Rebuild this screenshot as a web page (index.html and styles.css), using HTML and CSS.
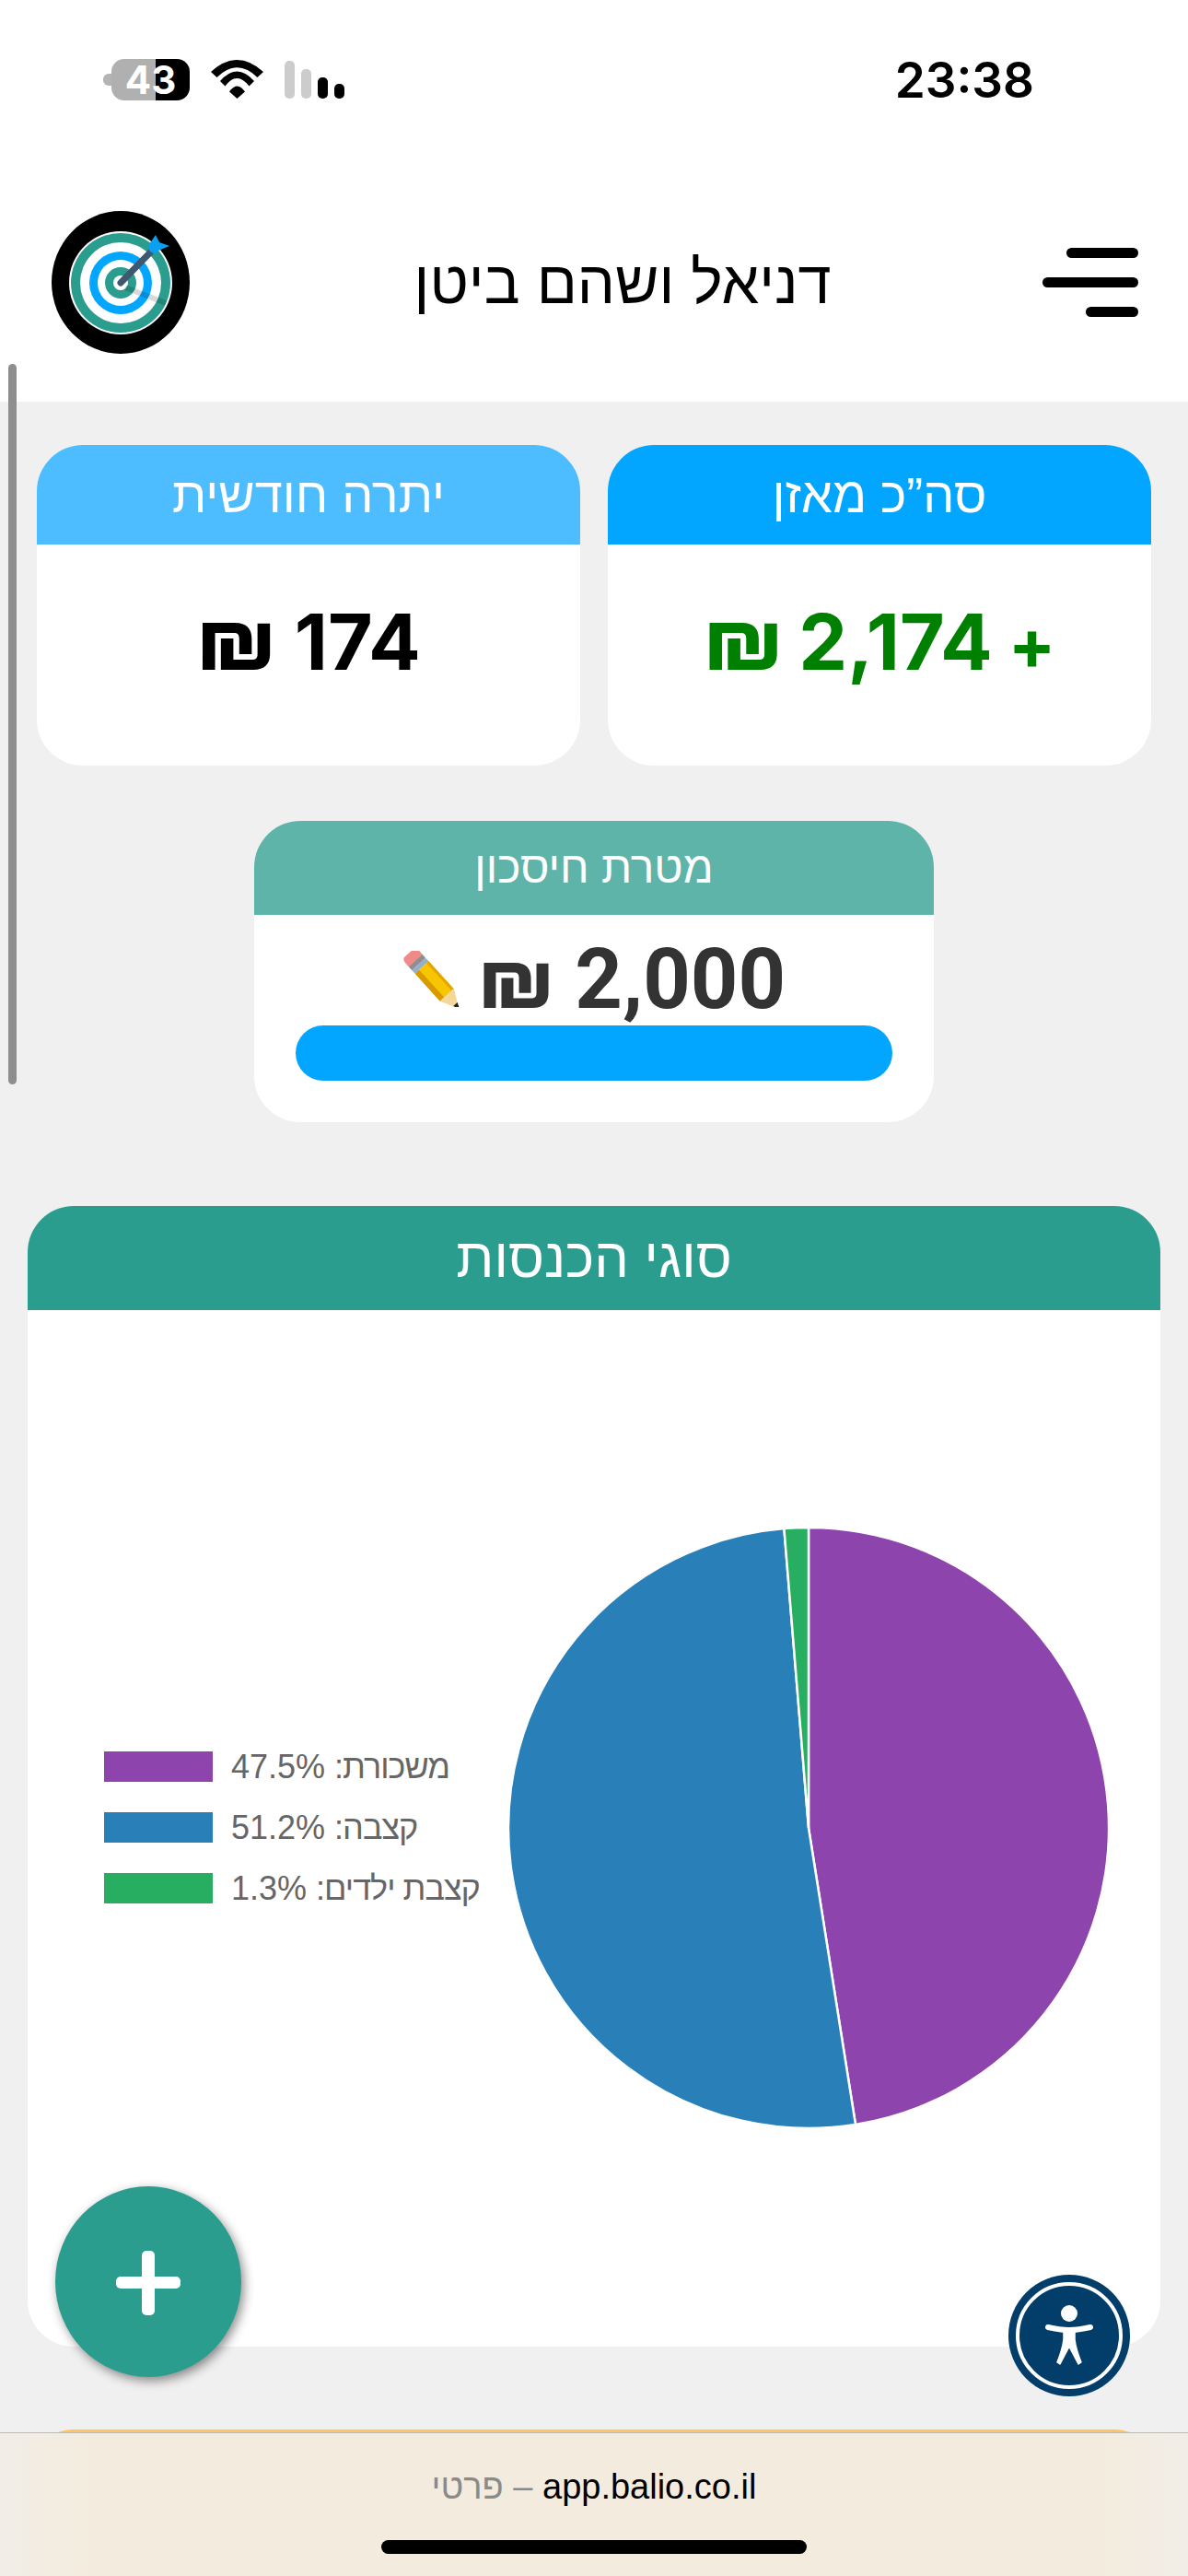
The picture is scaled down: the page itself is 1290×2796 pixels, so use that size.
FILE: index.html
```html
<!DOCTYPE html>
<html lang="he">
<head>
<meta charset="utf-8">
<title>Balio</title>
<link rel="stylesheet" href="styles.css">
</head>
<body>
<div class="page">
  <div class="status">
    <div class="status-left">
      <div class="battery"><span class="nub"></span><span class="cell">43</span></div>
      <svg class="wifi" width="57" height="42" viewBox="0 0 57 42"><path d="M0 13Q28.5-13 57 13L50.5 19Q28.5-2.4 6.5 19Z"/><path d="M10 23Q28.5 2 47 23L41.5 28.5Q28.5 11.5 15.5 28.5Z"/><path d="M20 34.5Q28.5 22.5 37 34.5L28.5 42Z"/></svg>
      <div class="signal"><i class="s1"></i><i class="s2"></i><i class="s3"></i><i class="s4"></i></div>
    </div>
    <div class="time">23:38</div>
  </div>

  <header class="topbar">
    <svg class="logo" width="150" height="155" viewBox="0 0 150 155">
      <ellipse cx="75" cy="77.5" rx="75" ry="77.5" fill="#000"/>
      <circle cx="75" cy="78" r="56" fill="#fff"/>
      <circle cx="75" cy="78" r="54" fill="#2a9d8f"/>
      <circle cx="75" cy="78" r="44" fill="#fff"/>
      <circle cx="75" cy="78" r="34" fill="#03a6ff"/>
      <circle cx="75" cy="78" r="25" fill="#fff"/>
      <circle cx="75" cy="78" r="17" fill="#2a9d8f"/>
      <circle cx="75" cy="78" r="8" fill="#fff"/>
      <path d="M80 83L124 100" stroke="#000" stroke-opacity=".15" stroke-width="6" fill="none"/>
      <path d="M75 78L110 42" stroke="#3f5870" stroke-width="7" stroke-linecap="round" fill="none"/>
      <path d="M113 26L117 34L128 38L116 43L112 47L106 43L106 36Z" fill="#0a9ff0"/>
    </svg>
    <h1 class="title" dir="rtl">דניאל ושהם ביטן</h1>
    <div class="burger"><i class="b1"></i><i class="b2"></i><i class="b3"></i></div>
  </header>

  <main class="content">
    <section class="stats">
      <article class="card">
        <h2 class="card-head head-light" dir="rtl">יתרה חודשית</h2>
        <div class="card-body"><span class="amount" dir="rtl">174 <span class="shekel">₪</span></span></div>
      </article>
      <article class="card">
        <h2 class="card-head head-blue" dir="rtl">סה”כ מאזן</h2>
        <div class="card-body"><span class="amount positive" dir="rtl"><span class="plus">+</span> 2,174 <span class="shekel">₪</span></span></div>
      </article>
    </section>

    <section class="goal">
      <h2 class="goal-head" dir="rtl">מטרת חיסכון</h2>
      <div class="goal-body">
        <div class="goal-line">
          <svg class="pencil" width="62" height="61" viewBox="0 0 62 61">
            <g transform="translate(11 7) rotate(47.7)">
              <path d="M-6 -6Q-6 -10 0 -10H6V10H0Q-6 10 -6 6Z" fill="#ee8a8a"/>
              <rect x="5" y="-10" width="5" height="20" fill="#8f8f8f"/>
              <rect x="10" y="-10" width="5" height="20" fill="#94aecb"/>
              <path d="M15 -10H55L74 0L55 10H15Z" fill="#f7c600"/>
              <path d="M15 -10H55L61 -7H15Z" fill="#e5a400"/>
              <path d="M15 4H64L55 10H15Z" fill="#d89a00"/>
              <path d="M55 -10L75 0L55 10Z" fill="#f5d79a"/>
              <path d="M69 -3L76 0L69 3Z" fill="#222"/>
            </g>
          </svg>
          <span class="goal-amount" dir="rtl">2,000 <span class="goal-shekel">₪</span></span>
        </div>
        <div class="progress"></div>
      </div>
    </section>

    <section class="chart-card">
      <h2 class="chart-head" dir="rtl">סוגי הכנסות</h2>
      <div class="chart-body">
        <ul class="legend">
          <li class="legend-row"><i class="swatch c-purple"></i><span dir="rtl"><span class="legend-name">משכורת:</span> 47.5%</span></li>
          <li class="legend-row"><i class="swatch c-blue"></i><span dir="rtl"><span class="legend-name">קצבה:</span> 51.2%</span></li>
          <li class="legend-row"><i class="swatch c-green"></i><span dir="rtl"><span class="legend-name">קצבת ילדים:</span> 1.3%</span></li>
        </ul>
        <svg class="pie" width="654" height="654" viewBox="-327 -327 654 654">
          <g stroke="#fff" stroke-width="2.5">
            <path d="M0 0L0 -326A326 326 0 0 1 51 322Z" fill="#8e44ad"/>
            <path d="M0 0L51 322A326 326 0 1 1 -26.6 -324.9Z" fill="#2980b9"/>
            <path d="M0 0L-26.6 -324.9A326 326 0 0 1 0 -326Z" fill="#27ae60"/>
          </g>
        </svg>
      </div>
    </section>

    <section class="next-card"></section>
  </main>

  <div class="scrollbar"></div>

  <button class="fab" aria-label="הוספה"><i class="plus-h"></i><i class="plus-v"></i></button>

  <div class="a11y">
    <svg width="132" height="132" viewBox="-66 -66 132 132">
      <circle r="66" fill="#033e6b"/>
      <circle r="56" fill="none" stroke="#fff" stroke-width="4"/>
      <circle cy="-24" r="9" fill="#fff"/>
      <path d="M-23 -9Q-10 -6 0 -6Q10 -6 23 -9" fill="none" stroke="#fff" stroke-width="6" stroke-linecap="round"/>
      <path d="M-6 -7H6V4Q7 14 13 29L10 31L0 12L-10 31L-13 29Q-7 14 -6 4Z" fill="#fff" stroke="#fff" stroke-width="1.5" stroke-linejoin="round"/>
    </svg>
  </div>

  <footer class="urlbar">
    <div class="url" dir="rtl">app.balio.co.il <span class="url-note">– פרטי</span></div>
    <div class="home"></div>
  </footer>
</div>
</body>
</html>
```
FILE: styles.css
```css
* { box-sizing: border-box; }
html, body { margin: 0; padding: 0; }
body { background: #f0f0f0; font-family: "Liberation Sans", Arial, sans-serif; }
.page { position: relative; width: 1290px; height: 2796px; overflow: hidden; background: #f0f0f0; }

.status { height: 172px; background: #fff; display: flex; justify-content: space-between; align-items: center; padding: 0 167px 0 112px; }
.status-left { display: flex; align-items: center; gap: 23px; }
.battery { display: flex; align-items: center; }
.nub { width: 9px; height: 13px; background: #b4b4b4; border-radius: 6px 0 0 6px; }
.cell { width: 85px; height: 45px; border-radius: 14px; background: linear-gradient(90deg, #b0b0b0 56.5%, #000 56.5%); color: #fff; font: 700 42px/45px "Inter", "Liberation Sans", sans-serif; text-align: center; }
.wifi { fill: #000; display: block; }
.signal { display: flex; align-items: flex-end; gap: 7px; height: 41px; }
.signal i { display: block; width: 11px; border-radius: 5px; background: #000; }
.signal .s1 { height: 41px; background: #ccc; }
.signal .s2 { height: 32px; background: #ccc; }
.signal .s3 { height: 23px; }
.signal .s4 { height: 16px; }
.time { margin-top: 3px; font: 600 53px/1 "Inter", "Liberation Sans", sans-serif; color: #000; }

.topbar { height: 264px; background: #fff; display: flex; align-items: center; padding: 5px 54px 0 56px; }
.logo { flex: none; display: block; }
.title { flex: 1; margin: 0; padding-left: 14px; text-align: center; font: 400 65px/1.2 "Liberation Sans", sans-serif; color: #000; }
.burger { flex: none; width: 104px; display: flex; flex-direction: column; align-items: flex-end; gap: 21px; }
.burger i { display: block; height: 11px; background: #000; border-radius: 6px; }
.b1 { width: 78px; }
.b2 { width: 104px; }
.b3 { width: 57px; }

.stats { display: grid; grid-template-columns: 590px 590px; gap: 30px; padding: 47px 40px 0; }
.card { height: 348px; background: #fff; border-radius: 50px; overflow: hidden; }
.card-head { height: 108px; margin: 0; text-align: center; color: #fff; font: 400 54px/108px "Liberation Sans", sans-serif; }
.head-light { background: #4dbdff; }
.head-blue { background: #03a6ff; }
.card-body { height: 240px; padding-top: 55px; text-align: center; }
.amount { font: 700 84px/100px "Inter", "Liberation Sans", sans-serif; color: #000; }
.positive { color: #008000; word-spacing: -3px; }
.shekel { font-size: 94px; line-height: 1; }
.plus { font-size: 76px; }

.goal { width: 738px; height: 327px; margin: 60px auto 0; background: #fff; border-radius: 50px; overflow: hidden; }
.goal-head { height: 102px; margin: 0; background: #5fb4aa; color: #fff; text-align: center; font: 400 48px/102px "Liberation Sans", sans-serif; }
.goal-body { padding: 22px 45px 0; }
.goal-line { display: flex; justify-content: center; align-items: center; gap: 20px; height: 98px; }
.goal-amount { font: 700 90px/100px "Roboto", "Liberation Sans", sans-serif; color: #333; }
.goal-shekel { font: 700 90px/1 "Inter", "Liberation Sans", sans-serif; }
.pencil { display: block; flex: none; margin-top: -4px; }
.progress { height: 60px; background: #03a6ff; border-radius: 30px; }

.chart-card { margin: 91px 30px 0; height: 1238px; background: #fff; border-radius: 50px; overflow: hidden; }
.chart-head { height: 113px; margin: 0; background: #2a9d8f; color: #fff; text-align: center; font: 400 59.5px/113px "Liberation Sans", sans-serif; }
.chart-body { height: 1125px; display: flex; justify-content: space-between; align-items: center; padding: 0 55px 2px 83px; }
.legend { list-style: none; margin: 0; padding: 0; display: flex; flex-direction: column; gap: 33px; }
.legend-row { display: flex; align-items: center; gap: 20px; height: 33px; color: #666; font: 400 36px/33px "Liberation Sans", sans-serif; white-space: nowrap; }
.legend-name { letter-spacing: -1px; }
.swatch { display: block; width: 118px; height: 33px; }
.c-purple { background: #8e44ad; }
.c-blue { background: #2980b9; }
.c-green { background: #27ae60; }
.pie { display: block; flex: none; }

.next-card { margin: 90px 30px 0; height: 400px; background: #ffc45c; border-radius: 50px; }

.scrollbar { position: absolute; left: 9px; top: 395px; width: 9px; height: 782px; background: #8e8e8e; border-radius: 5px; }

.fab { position: absolute; left: 60px; top: 2373px; width: 202px; height: 207px; padding: 0; border: 0; border-radius: 50%; background: #2a9d8f; box-shadow: 3px 4px 12px rgba(0,0,0,.45); }
.fab i { position: absolute; display: block; background: #fff; border-radius: 5px; }
.plus-h { left: 66px; top: 98px; width: 70px; height: 13px; }
.plus-v { left: 94px; top: 70px; width: 14px; height: 70px; }

.a11y { position: absolute; left: 1095px; top: 2469px; width: 132px; height: 132px; }
.a11y svg { display: block; }

.urlbar { position: absolute; left: 0; right: 0; top: 2640px; height: 156px; background: linear-gradient(90deg, #f2eee7, #f3ebdd 8%, #f3ebdd 92%, #f2eee7); border-top: 1px solid #bcbab5; display: flex; flex-direction: column; align-items: center; }
.url { margin-top: 36px; height: 44px; font: 400 38px/44px "Liberation Sans", sans-serif; color: #000; }
.url-note { color: #8a8a8a; }
.home { margin-top: 36px; width: 462px; height: 15px; background: #000; border-radius: 8px; }
```
